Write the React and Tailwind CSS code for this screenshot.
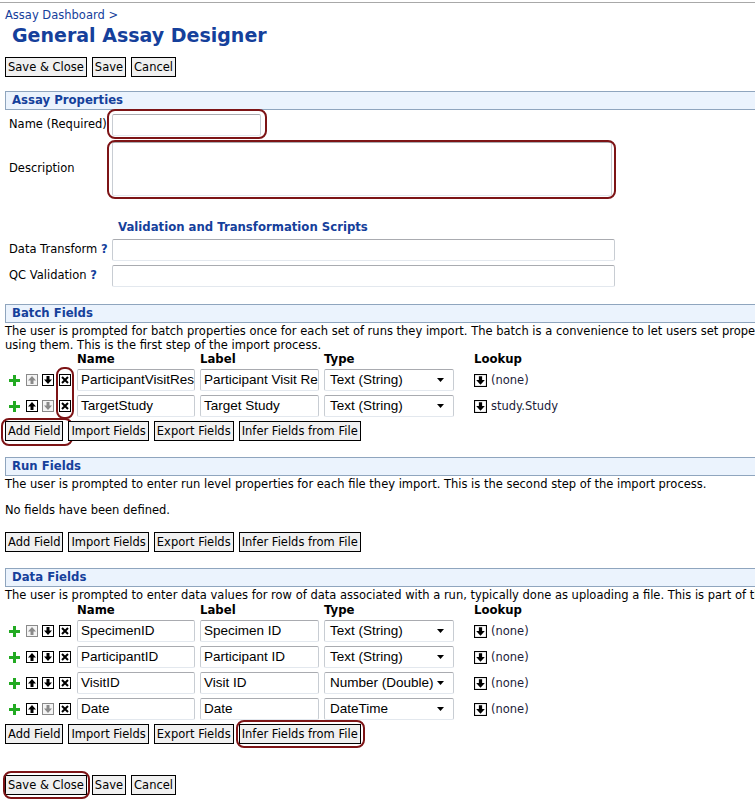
import React from "react";

const font = { fontFamily: '"DejaVu Sans", Verdana, sans-serif' };
const ring = "absolute border-2 border-[#7d1416] rounded-[8px] pointer-events-none";

function Btn({ children, ringClass }) {
  return (
    <div className="relative flex">
      <button className="block h-[20px] px-[2px] border border-black bg-[#f0f0f0] text-[11.5px] leading-[18px] text-black whitespace-nowrap">
        {children}
      </button>
      {ringClass && <div className={ring + " " + ringClass} />}
    </div>
  );
}

function Header({ title, className = "" }) {
  return (
    <div className={"ml-[5px] w-[900px] h-[19px] border border-[#8fa5be] bg-[#ebf3fd] pl-[6px] text-[11.7px] font-bold leading-[17px] text-[#15409b] " + className}>
      {title}
    </div>
  );
}

function TextBox({ value, className = "" }) {
  return (
    <div className={"h-[22px] border border-[#c8cdd3] border-t-[#a9abb0] border-b-[#e3e8ee] rounded-[2px] bg-white pl-[3px] text-[13.5px] leading-[20px] text-black overflow-hidden whitespace-nowrap " + className}
      style={{ fontFamily: '"Liberation Sans", Arial, sans-serif' }}>
      {value}
    </div>
  );
}

function Plus() {
  return (
    <svg className="block" width="11" height="11" viewBox="0 0 11 11">
      <path d="M4 0h3v4h4v3H7v4H4V7H0V4h4z" fill="#22aa22" />
    </svg>
  );
}

function ArrowBox({ dir, off, size = 12 }) {
  const c = off ? "#8a8a8a" : "#000";
  const d = dir === "up"
    ? "M6 2 L10 6.5 H7.5 V10 H4.5 V6.5 H2 Z"
    : "M6 10 L10 5.5 H7.5 V2 H4.5 V5.5 H2 Z";
  return (
    <svg className="block" width={size} height={size} viewBox="0 0 12 12">
      <rect x="0.5" y="0.5" width="11" height="11" fill={off ? "#f4f4f4" : "#fff"} stroke={c} />
      <path d={d} fill={c} />
    </svg>
  );
}

function XBox() {
  return (
    <svg className="block" width="12" height="12" viewBox="0 0 12 12">
      <rect x="0.5" y="0.5" width="11" height="11" fill="#fff" stroke="#000" />
      <path d="M3 3 L9 9 M9 3 L3 9" stroke="#000" strokeWidth="2" />
    </svg>
  );
}

function FieldRow({ name, label, type, lookup, upOff, downOff }) {
  return (
    <div className="flex items-center h-[22px]">
      <div className="w-[72px] flex items-center pl-[4px]">
        <Plus />
        <div className="ml-[6px]"><ArrowBox dir="up" off={upOff} /></div>
        <div className="ml-[4px]"><ArrowBox dir="down" off={downOff} /></div>
        <div className="ml-[5px]"><XBox /></div>
      </div>
      <TextBox value={name} className="w-[118px]" />
      <TextBox value={label} className="w-[119px] ml-[5px]" />
      <div className="w-[130px] ml-[5px] relative">
        <TextBox value={type} className="w-[130px] pl-[5px]" />
        <svg className="absolute right-[10px] top-[9px]" width="7" height="4" viewBox="0 0 7 4">
          <path d="M0 0h7L3.5 4z" fill="#000" />
        </svg>
      </div>
      <div className="ml-[20px] flex items-center">
        <ArrowBox dir="down" size={13} />
        <span className="ml-[4px] text-[11.5px] leading-[14px] text-[#1c1c3a]">{lookup}</span>
      </div>
    </div>
  );
}

function ColHeads() {
  return (
    <div className="flex h-[14px] text-[11.7px] font-bold leading-[14px] text-black">
      <div className="w-[77px]" />
      <div className="w-[123px]">Name</div>
      <div className="w-[124px]">Label</div>
      <div className="w-[150px]">Type</div>
      <div>Lookup</div>
    </div>
  );
}

function FieldButtons({ className = "", addRing, inferRing }) {
  return (
    <div className={"flex h-[20px] ml-[5px] gap-[5px] " + className}>
      <Btn ringClass={addRing ? "-left-[4px] -top-[3px] -right-[10px] -bottom-[5px]" : null}>Add Field</Btn>
      <Btn>Import Fields</Btn>
      <Btn>Export Fields</Btn>
      <Btn ringClass={inferRing ? "-left-[3px] -top-[4px] -right-[4px] -bottom-[4px]" : null}>Infer Fields from File</Btn>
    </div>
  );
}

export default function App() {
  return (
    <div className="w-[755px] h-[803px] overflow-hidden bg-white text-black" style={font}>
      <div className="w-[900px]">
        <div className="h-[2px]" />
        <div className="h-px bg-[#a8a8a8]" />

        <div className="mt-[5px] h-[14px] pl-[5px] text-[11.5px] leading-[14px] text-[#15409b]">Assay Dashboard &gt;</div>
        <div className="mt-[1px] h-[24px] pl-[12px] text-[19px] font-bold leading-[24px] text-[#15409b]">General Assay Designer</div>

        <div className="mt-[10px] ml-[5px] flex gap-[5px]">
          <Btn>Save &amp; Close</Btn>
          <Btn>Save</Btn>
          <Btn>Cancel</Btn>
        </div>

        <Header title="Assay Properties" className="mt-[14px]" />

        <div className="mt-[4px] flex items-center h-[22px]">
          <div className="w-[112px] pl-[9px] text-[11.5px] whitespace-nowrap">Name (Required)</div>
          <div className="relative">
            <TextBox value="" className="w-[149px]" />
            <div className={ring + " -left-[5px] -top-[5px] w-[160px] h-[30px]"} />
          </div>
        </div>

        <div className="mt-[6px] flex items-center h-[54px]">
          <div className="w-[112px] pl-[9px] text-[11.5px]">Description</div>
          <div className="relative">
            <TextBox value="" className="w-[500px] h-[54px]" />
            <div className={ring + " -left-[5px] -top-[2px] w-[509px] h-[59px]"} />
          </div>
        </div>

        <div className="mt-[24px] h-[14px] pl-[118px] text-[11.7px] font-bold leading-[14px] text-[#15409b]">Validation and Transformation Scripts</div>

        <div className="mt-[5px] flex items-center h-[22px]">
          <div className="w-[112px] pl-[9px] text-[11.5px] whitespace-nowrap">Data Transform <span className="font-bold text-[#15409b]">?</span></div>
          <TextBox value="" className="w-[503px]" />
        </div>
        <div className="mt-[4px] flex items-center h-[22px]">
          <div className="w-[112px] pl-[9px] text-[11.5px] whitespace-nowrap">QC Validation <span className="font-bold text-[#15409b]">?</span></div>
          <TextBox value="" className="w-[503px]" />
        </div>

        <Header title="Batch Fields" className="mt-[17px]" />
        <div className="mt-[1px] pl-[5px] text-[11.5px] leading-[14px] whitespace-nowrap">
          <div className="h-[14px]">The user is prompted for batch properties once for each set of runs they import. The batch is a convenience to let users set proper</div>
          <div className="h-[14px]">using them. This is the first step of the import process.</div>
        </div>
        <ColHeads />
        <div className="relative mt-[3px] ml-[5px] flex flex-col gap-[4px]">
          <FieldRow name="ParticipantVisitRes" label="Participant Visit Re" type="Text (String)" lookup="(none)" upOff />
          <FieldRow name="TargetStudy" label="Target Study" type="Text (String)" lookup="study.Study" downOff />
          <div className={ring + " left-[51px] -top-[2px] w-[18px] h-[52px]"} />
        </div>
        <FieldButtons className="mt-[4px]" addRing />

        <Header title="Run Fields" className="mt-[16px]" />
        <div className="mt-[1px] h-[14px] pl-[5px] text-[11.5px] leading-[14px] whitespace-nowrap">The user is prompted to enter run level properties for each file they import. This is the second step of the import process.</div>
        <div className="mt-[12px] h-[14px] pl-[5px] text-[11.5px] leading-[14px]">No fields have been defined.</div>
        <FieldButtons className="mt-[15px]" />

        <Header title="Data Fields" className="mt-[16px]" />
        <div className="mt-[1px] h-[14px] pl-[5px] text-[11.5px] leading-[14px] whitespace-nowrap">The user is prompted to enter data values for row of data associated with a run, typically done as uploading a file. This is part of th</div>
        <div className="mt-[1px]"><ColHeads /></div>
        <div className="mt-[3px] ml-[5px] flex flex-col gap-[4px]">
          <FieldRow name="SpecimenID" label="Specimen ID" type="Text (String)" lookup="(none)" upOff />
          <FieldRow name="ParticipantID" label="Participant ID" type="Text (String)" lookup="(none)" />
          <FieldRow name="VisitID" label="Visit ID" type="Number (Double)" lookup="(none)" />
          <FieldRow name="Date" label="Date" type="DateTime" lookup="(none)" downOff />
        </div>
        <FieldButtons className="mt-[4px]" inferRing />

        <div className="mt-[31px] ml-[5px] flex gap-[5px]">
          <Btn ringClass="-left-[2px] -top-[4px] -right-[3px] -bottom-[4px]">Save &amp; Close</Btn>
          <Btn>Save</Btn>
          <Btn>Cancel</Btn>
        </div>
      </div>
    </div>
  );
}
